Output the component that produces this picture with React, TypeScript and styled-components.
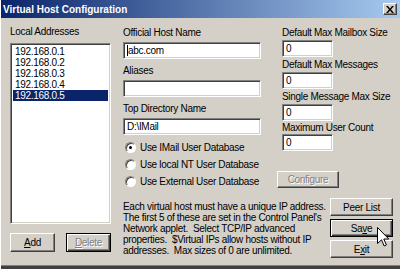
import React from 'react'
import styled, { createGlobalStyle, css } from 'styled-components'

const GlobalStyle = createGlobalStyle`
  html, body {
    margin: 0;
    padding: 0;
    background: #d4d0c8;
  }
  * {
    box-sizing: border-box;
  }
`

const face = '#d4d0c8'
const shadow = '#808080'
const dark = '#404040'

const Window = styled.div`
  position: relative;
  width: 400px;
  height: 269px;
  overflow: hidden;
  background: ${face};
  border-left: 1px solid #ffffff;
  font-family: 'Liberation Sans', Arial, sans-serif;
  font-size: 10px;
  letter-spacing: -0.3px;
  color: #000;
  display: flex;
  flex-direction: column;
`

const TitleBar = styled.div`
  height: 18px;
  flex: none;
  display: flex;
  align-items: center;
  justify-content: space-between;
  padding: 0 3px 0 2px;
  background: linear-gradient(to right, #0a246a, #a6caf0);
`

const Title = styled.span`
  color: #fff;
  font-weight: bold;
  letter-spacing: 0;
  font-size: 10px;
`

const CloseButton = styled.div`
  width: 14px;
  height: 12px;
  background: ${face};
  border: 1px solid;
  border-color: #fff ${dark} ${dark} #fff;
  box-shadow: inset -1px -1px ${shadow};
  display: flex;
  align-items: center;
  justify-content: center;
`

const Body = styled.div`
  flex: 1;
  display: flex;
  padding: 8px 0 0 9px;
  border-bottom: 3px solid ${dark};
  box-shadow: inset 0 -1px ${shadow};
`

const LeftColumn = styled.div`
  width: 101px;
  display: flex;
  flex-direction: column;
`

const Label = styled.div<{ $gap?: number }>`
  line-height: 12px;
  height: 12px;
  white-space: nowrap;
  margin-top: ${(p) => p.$gap ?? 0}px;
`

const sunken = css`
  background: #fff;
  border: 1px solid;
  border-color: ${shadow} #fff #fff ${shadow};
  box-shadow: inset 1px 1px ${dark}, inset -1px -1px ${face};
`

const ListBox = styled.div`
  ${sunken};
  height: 181px;
  margin-top: 5px;
  padding: 2px;
`

const ListItem = styled.div<{ $selected?: boolean }>`
  height: 11px;
  line-height: 11px;
  padding-left: 2px;
  background: ${(p) => (p.$selected ? '#0a246a' : 'transparent')};
  color: ${(p) => (p.$selected ? '#fff' : '#000')};
`

const ButtonRow = styled.div`
  display: flex;
  justify-content: space-between;
  margin-top: 9px;
`

const Button = styled.div<{ $width: number; $height?: number; $default?: boolean; $disabled?: boolean }>`
  width: ${(p) => p.$width}px;
  height: ${(p) => p.$height ?? 18}px;
  background: ${face};
  border: 1px solid;
  border-color: #fff ${dark} ${dark} #fff;
  box-shadow: inset -1px -1px ${shadow};
  display: flex;
  align-items: center;
  justify-content: center;
  white-space: nowrap;
  ${(p) =>
    p.$default &&
    css`
      border-color: #000;
      box-shadow: inset 1px 1px #fff, inset -1px -1px ${dark}, inset -2px -2px ${shadow};
    `}
  ${(p) =>
    p.$disabled &&
    css`
      color: ${shadow};
      text-shadow: 1px 1px #fff;
    `}
`

const Main = styled.div`
  margin-left: 12px;
  width: 270px;
  display: flex;
  flex-direction: column;
`

const TopRow = styled.div`
  display: flex;
`

const FieldColumn = styled.div`
  width: 138px;
  margin-top: 1px;
  display: flex;
  flex-direction: column;
`

const SideColumn = styled.div`
  margin-left: 16px;
  display: flex;
  flex-direction: column;
  align-items: flex-start;
`

const SideField = styled.div`
  padding-left: 5px;
  display: flex;
  flex-direction: column;
`

const TextBox = styled.div<{ $width?: number; $gap?: number }>`
  ${sunken};
  width: ${(p) => (p.$width ? `${p.$width}px` : '100%')};
  height: 17px;
  margin-top: ${(p) => p.$gap ?? 3}px;
  padding: 0 3px;
  display: flex;
  align-items: center;
  line-height: 13px;
`

const Caret = styled.span`
  display: inline-block;
  width: 1px;
  height: 11px;
  background: #000;
  margin-right: 0px;
`

const RadioGroup = styled.div`
  margin-top: 4px;
  display: flex;
  flex-direction: column;
`

const RadioRow = styled.div`
  height: 17px;
  display: flex;
  align-items: center;
  padding-left: 2px;
  gap: 4px;
  white-space: nowrap;
`

const RadioCircle = styled.span<{ $checked?: boolean }>`
  width: 11px;
  height: 11px;
  border-radius: 50%;
  background: #fff;
  border: 1px solid;
  border-color: ${shadow} #fff #fff ${shadow};
  box-shadow: inset 1px 1px ${dark};
  display: flex;
  align-items: center;
  justify-content: center;
  &::after {
    content: '';
    width: 3px;
    height: 3px;
    border-radius: 50%;
    background: #000;
    display: ${(p) => (p.$checked ? 'block' : 'none')};
  }
`

const BottomRow = styled.div`
  display: flex;
  justify-content: space-between;
  margin-top: 8px;
`

const Note = styled.p`
  margin: 3px 0 0;
  line-height: 11px;
  white-space: nowrap;
`

const ButtonColumn = styled.div`
  display: flex;
  flex-direction: column;
  gap: 3px;
`

const Cursor = styled.svg`
  position: absolute;
  left: 376px;
  top: 227px;
`

const Key = styled.u`
  text-decoration: underline;
`

const addresses = ['192.168.0.1', '192.168.0.2', '192.168.0.3', '192.168.0.4', '192.168.0.5']

export default function App() {
  return (
    <>
      <GlobalStyle />
      <Window>
        <TitleBar>
          <Title>Virtual Host Configuration</Title>
          <CloseButton>
            <svg width="8" height="7" viewBox="0 0 8 7">
              <path d="M0 0h2l2 2.5L6 0h2L5 3.5 8 7H6L4 4.5 2 7H0l3-3.5z" fill="#000" />
            </svg>
          </CloseButton>
        </TitleBar>
        <Body>
          <LeftColumn>
            <Label>Local Addresses</Label>
            <ListBox>
              {addresses.map((a, i) => (
                <ListItem key={a} $selected={i === addresses.length - 1}>
                  {a}
                </ListItem>
              ))}
            </ListBox>
            <ButtonRow>
              <Button $width={45} $height={19}>
                <span>
                  <Key>A</Key>dd
                </span>
              </Button>
              <Button $width={45} $height={19} $default $disabled>
                <span>
                  <Key>D</Key>elete
                </span>
              </Button>
            </ButtonRow>
          </LeftColumn>
          <Main>
            <TopRow>
              <FieldColumn>
                <Label>Official Host Name</Label>
                <TextBox>
                  <Caret />
                  abc.com
                </TextBox>
                <Label $gap={6}>Aliases</Label>
                <TextBox />
                <Label $gap={6}>Top Directory Name</Label>
                <TextBox>D:\IMail</TextBox>
                <RadioGroup>
                  <RadioRow>
                    <RadioCircle $checked />
                    Use IMail User Database
                  </RadioRow>
                  <RadioRow>
                    <RadioCircle />
                    Use local NT User Database
                  </RadioRow>
                  <RadioRow>
                    <RadioCircle />
                    Use External User Database
                  </RadioRow>
                </RadioGroup>
              </FieldColumn>
              <SideColumn>
                <SideField>
                  <Label $gap={1}>Default Max Mailbox Size</Label>
                  <TextBox $width={51} $gap={1}>0</TextBox>
                  <Label $gap={2}>Default Max Messages</Label>
                  <TextBox $width={51} $gap={1}>0</TextBox>
                  <Label $gap={2}>Single Message Max Size</Label>
                  <TextBox $width={51} $gap={1}>0</TextBox>
                  <Label $gap={1}>Maximum User Count</Label>
                  <TextBox $width={51} $gap={0}>0</TextBox>
                </SideField>
                <Button $width={62} $height={17} $disabled style={{ marginTop: 20 }}>
                  Configure
                </Button>
              </SideColumn>
            </TopRow>
            <BottomRow>
              <Note>
                Each virtual host must have a unique IP address.
                <br />
                The first 5 of these are set in the Control Panel's
                <br />
                Network applet.&nbsp; Select TCP/IP advanced
                <br />
                properties.&nbsp; $Virtual IPs allow hosts without IP
                <br />
                addresses.&nbsp; Max sizes of 0 are unlimited.
              </Note>
              <ButtonColumn>
                <Button $width={63}>Peer List</Button>
                <Button $width={63} $default>
                  <span>
                    Sa<Key>v</Key>e
                  </span>
                </Button>
                <Button $width={63}>
                  <span>
                    E<Key>x</Key>it
                  </span>
                </Button>
              </ButtonColumn>
            </BottomRow>
          </Main>
        </Body>
        <Cursor width="13" height="21" viewBox="0 0 13 21">
          <path
            d="M0.5 0.5 L0.5 16.5 L4.5 12.8 L7.2 19 L9.4 18 L6.8 12 L11.8 12 Z"
            fill="#fff"
            stroke="#000"
            strokeWidth="1"
            strokeLinejoin="miter"
          />
        </Cursor>
      </Window>
    </>
  )
}
